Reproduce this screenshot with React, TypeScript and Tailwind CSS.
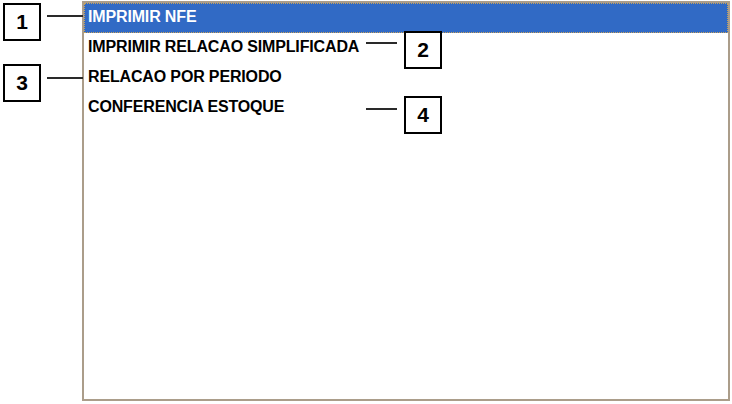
import React from 'react';

const items = [
  'IMPRIMIR NFE',
  'IMPRIMIR RELACAO SIMPLIFICADA',
  'RELACAO POR PERIODO',
  'CONFERENCIA ESTOQUE',
];

// callout number boxes with their leader lines
const callouts = [
  { n: '1', box: 'left-[3px] top-[3px]', line: 'left-[47px] top-[15px] w-[36px]' },
  { n: '2', box: 'left-[404px] top-[31px]', line: 'left-[366px] top-[42px] w-[31px]' },
  { n: '3', box: 'left-[3px] top-[64px]', line: 'left-[47px] top-[77px] w-[36px]' },
  { n: '4', box: 'left-[404px] top-[96px]', line: 'left-[366px] top-[108px] w-[31px]' },
];

const Callout = ({ n, box, line }: { n: string; box: string; line: string }) => (
  <>
    <div className={`absolute h-[2px] bg-[#2a2a2a] ${line}`} />
    <div
      className={`absolute w-[38px] h-[38px] border-2 border-black bg-white flex items-center justify-center text-[21px] font-bold text-black ${box}`}
    >
      {n}
    </div>
  </>
);

export default function App() {
  const selected = 0;

  return (
    <div
      className="relative w-[732px] h-[404px] bg-white overflow-hidden"
      style={{ fontFamily: '"Liberation Sans", Arial, sans-serif' }}
    >
      {/* List box */}
      <div className="ml-[82px] mt-[1px] w-[648px] h-[400px] border-2 border-[#ab9d8a] bg-white flex flex-col">
        {items.map((label, i) => (
          <div
            key={label}
            className={`h-[30px] shrink-0 pl-[4px] leading-[27px] text-[16px] font-bold tracking-[-0.15px] whitespace-nowrap ${
              i === selected
                ? 'bg-[#316ac5] text-white outline outline-1 outline-dotted outline-offset-[-1px] outline-[#c8a25a]'
                : 'text-black'
            }`}
          >
            {label}
          </div>
        ))}
      </div>

      {callouts.map((c) => (
        <Callout key={c.n} {...c} />
      ))}
    </div>
  );
}
